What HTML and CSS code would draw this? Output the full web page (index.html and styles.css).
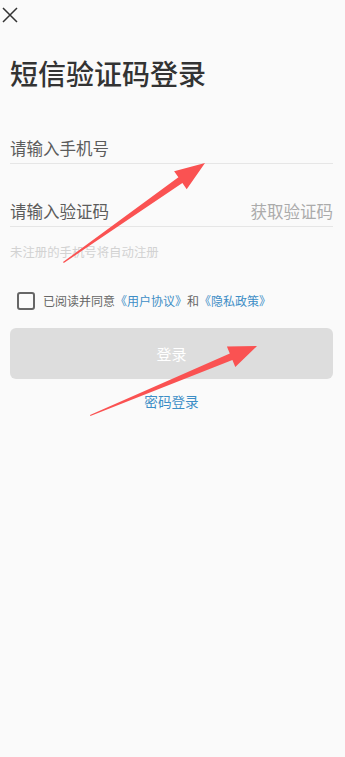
FILE: index.html
```html
<!DOCTYPE html>
<html lang="zh-CN">
<head>
<meta charset="utf-8">
<meta name="viewport" content="width=device-width, initial-scale=1">
<title>短信验证码登录</title>
<link rel="stylesheet" href="styles.css">
</head>
<body>
<div class="screen">
  <div class="topbar">
    <svg class="close" width="16" height="16" viewBox="0 0 16 16" aria-label="关闭">
      <path d="M1 1 L15 15 M15 1 L1 15" stroke="#333" stroke-width="1.5" fill="none"/>
    </svg>
  </div>
  <div class="page">
    <h1 class="title">短信验证码登录</h1>
    <div class="field first">
      <span class="placeholder">请输入手机号</span>
    </div>
    <div class="field second">
      <span class="placeholder">请输入验证码</span>
      <span class="getcode">获取验证码</span>
    </div>
    <p class="hint">未注册的手机号将自动注册</p>
    <div class="agree">
      <span class="checkbox"></span>
      <span class="agree-text">已阅读并同意<span class="link">《用户协议》</span>和<span class="link">《隐私政策》</span></span>
    </div>
    <div class="btn">登录</div>
    <div class="alt">密码登录</div>
  </div>
  <svg class="annot" width="345" height="757" viewBox="0 0 345 757">
    <polygon fill="#fa5252" points="63,262 178.4,177.3 174.1,171.2 205,163 186.7,189.2 182.4,183.1 63.8,263"/>
    <polygon fill="#fa5252" points="90,415 229.8,353.5 226.9,346.5 257,346 235.3,366.9 232.4,359.9 90.4,416"/>
  </svg>
</div>
</body>
</html>
```

FILE: styles.css
```css
* { box-sizing: border-box; }
html, body {
  margin: 0;
  padding: 0;
  background: #fafafa;
}
body {
  font-family: "Noto Sans CJK SC", "Noto Sans", sans-serif;
  color: #333;
}
.screen {
  position: relative;
  width: 345px;
  height: 757px;
  overflow: hidden;
}
.topbar {
  height: 30px;
  padding: 7px 0 0 2px;
}
.close { display: block; }
.page {
  padding: 0 12px 0 10px;
}
.title {
  margin: 25px 0 0;
  font-size: 28px;
  line-height: 36px;
  font-weight: 500;
  color: #333;
  letter-spacing: 0;
}
.field {
  display: flex;
  justify-content: space-between;
  align-items: center;
  line-height: 23px;
  padding-bottom: 3px;
  border-bottom: 1px solid #e6e6e6;
}
.field.first { margin-top: 46px; }
.field.second { margin-top: 36px; }
.placeholder {
  font-size: 16.5px;
  color: #5c5c5c;
}
.getcode {
  font-size: 16.5px;
  color: #ababab;
}
.hint {
  margin: 17px 0 0;
  font-size: 12.4px;
  line-height: 16px;
  color: #d2d2d2;
}
.agree {
  margin-top: 31px;
  display: flex;
  align-items: center;
  height: 20px;
}
.checkbox {
  width: 18px;
  height: 18px;
  margin-left: 7px;
  border: 2px solid #666;
  border-radius: 3px;
}
.agree-text {
  margin-left: 8px;
  font-size: 12px;
  color: #666;
  line-height: 16px;
}
.link { color: #3d8ec6; }
.btn {
  margin-top: 17px;
  height: 51px;
  border-radius: 6px;
  background: #dddddd;
  color: #fff;
  font-size: 15px;
  display: flex;
  align-items: center;
  justify-content: center;
}
.alt {
  margin-top: 12px;
  text-align: center;
  font-size: 13.6px;
  line-height: 20px;
  color: #3d8ec6;
}
.annot {
  position: absolute;
  left: 0;
  top: 0;
  pointer-events: none;
}
```
